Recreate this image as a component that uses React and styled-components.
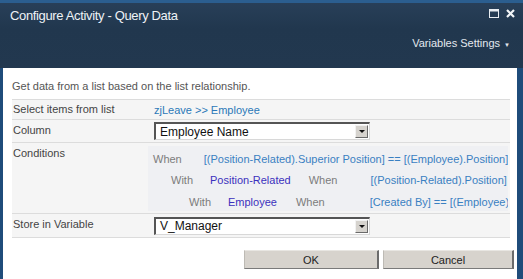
import React from 'react';
import styled, { createGlobalStyle } from 'styled-components';

const GlobalStyle = createGlobalStyle`
  html, body {
    margin: 0;
    padding: 0;
    overflow: hidden;
    background: #fff;
  }
`;

const Frame = styled.div`
  width: 523px;
  height: 279px;
  box-sizing: border-box;
  display: flex;
  flex-direction: column;
  background: #1f4c7a;
  font-family: "Liberation Sans", Arial, sans-serif;
`;

const TitleBar = styled.div`
  height: 68px;
  flex: none;
  box-sizing: border-box;
  border-top: 3px solid #2b5e8f;
  background: linear-gradient(#283f58, #21374e 40%, #22384f);
  color: #eef2f6;
  display: flex;
  flex-direction: column;
  padding: 0 8px 0 10px;
`;

const TitleRow = styled.div`
  display: flex;
  align-items: center;
  justify-content: space-between;
  height: 22px;
  margin-top: 1px;
`;

const Title = styled.div`
  font-size: 13px;
  letter-spacing: -0.35px;
`;

const WindowIcons = styled.div`
  display: flex;
  align-items: center;
  gap: 7px;
  margin-top: -3px;
`;

const MenuRow = styled.div`
  display: flex;
  justify-content: flex-end;
  align-items: center;
  margin-top: 11px;
  padding-right: 5px;
  font-size: 11px;
  color: #e3e8ee;
`;

const Caret = styled.span`
  font-size: 6px;
  margin-left: 4px;
  margin-top: 3px;
`;

const Body = styled.div`
  flex: 1;
  background: #fff;
  margin: 0 6px 0 3px;
  padding: 11px 7px 0 9px;
  display: flex;
  flex-direction: column;
`;

const Intro = styled.div`
  font-size: 11px;
  color: #555;
  height: 20px;
  line-height: 14px;
`;

const Table = styled.div`
  display: grid;
  grid-template-columns: 136px 1fr;
  border-top: 1px solid #dcdcdc;
  background: #f5f5f5;
`;

const Label = styled.div`
  font-size: 11px;
  color: #444;
  padding: ${({ $top }) => $top || '4px'} 0 0 1px;
  border-bottom: 1px solid #dcdcdc;
  height: ${({ $h }) => $h}px;
  box-sizing: border-box;
`;

const Value = styled.div`
  border-bottom: 1px solid #dcdcdc;
  height: ${({ $h }) => $h}px;
  box-sizing: border-box;
  padding-left: 6px;
  display: flex;
  align-items: center;
  min-width: 0;
  overflow: hidden;
`;

const Link = styled.span`
  font-size: 11px;
  color: #2a78b8;
`;

const SelectBox = styled.div`
  width: 216px;
  height: 18px;
  box-sizing: border-box;
  background: #fff;
  border-top: 2px solid #555;
  border-left: 2px solid #555;
  border-bottom: 1px solid #d8d8d8;
  border-right: 1px solid #d8d8d8;
  display: flex;
  align-items: center;
  justify-content: space-between;
  font-size: 12px;
  color: #111;
  padding-left: 4px;
`;

const DropButton = styled.div`
  width: 13px;
  height: 13px;
  box-sizing: border-box;
  margin-right: 1px;
  background: #d6d3ce;
  border: 1px solid;
  border-color: #f2f2f2 #6a6a6a #6a6a6a #f2f2f2;
  display: flex;
  align-items: center;
  justify-content: center;
`;

const Arrow = styled.span`
  width: 0;
  height: 0;
  border-left: 3px solid transparent;
  border-right: 3px solid transparent;
  border-top: 3px solid #111;
`;

const CondCell = styled.div`
  border-bottom: 1px solid #dcdcdc;
  height: 71px;
  box-sizing: border-box;
  padding: 3px 2px 2px 0;
  overflow: hidden;
`;

const CondBox = styled.div`
  background: #eff0f3;
  height: 100%;
  padding: 2px 0 0 5px;
  box-sizing: border-box;
  overflow: hidden;
`;

const CondLine = styled.div`
  display: flex;
  align-items: center;
  height: 21.5px;
  padding-left: ${({ $indent }) => $indent}px;
  white-space: nowrap;
  font-size: 11px;
`;

const Keyword = styled.span`
  color: #7c7c7c;
  margin-right: ${({ $after }) => $after}px;
`;

const ListName = styled.span`
  color: #3b30bd;
  margin-right: ${({ $after }) => $after}px;
`;

const Expr = styled.span`
  color: #3a80c2;
`;

const Footer = styled.div`
  display: flex;
  justify-content: flex-end;
  gap: 4px;
  margin-top: 12px;
  margin-right: -4px;
`;

const Button = styled.button`
  width: ${({ $w }) => $w}px;
  height: 19px;
  padding: 0;
  background: #d7d3cd;
  border: 1px solid;
  border-color: #e8e6e2 #6b6b6b #7a7a7a #bdbab4;
  border-right-width: 2px;
  font-family: "Liberation Sans", Arial, sans-serif;
  font-size: 11px;
  color: #222;
`;

const MaxIcon = () => (
  <svg width="10" height="9" viewBox="0 0 10 9">
    <rect x="0.5" y="0.5" width="9" height="8" fill="none" stroke="#e8edf2" />
    <rect x="0.5" y="0.5" width="9" height="2" fill="#e8edf2" />
  </svg>
);

const CloseIcon = () => (
  <svg width="9" height="9" viewBox="0 0 9 9">
    <path d="M1 1 L8 8 M8 1 L1 8" stroke="#f2f5f8" strokeWidth="2.2" />
  </svg>
);

export default function App() {
  return (
    <Frame>
      <GlobalStyle />
      <TitleBar>
        <TitleRow>
          <Title>Configure Activity - Query Data</Title>
          <WindowIcons>
            <MaxIcon />
            <CloseIcon />
          </WindowIcons>
        </TitleRow>
        <MenuRow>
          Variables Settings<Caret>▼</Caret>
        </MenuRow>
      </TitleBar>
      <Body>
        <Intro>Get data from a list based on the list relationship.</Intro>
        <Table>
          <Label $h={20} $top="3px">Select items from list</Label>
          <Value $h={20}>
            <Link>zjLeave &gt;&gt; Employee</Link>
          </Value>

          <Label $h={23}>Column</Label>
          <Value $h={23}>
            <SelectBox>
              Employee Name
              <DropButton><Arrow /></DropButton>
            </SelectBox>
          </Value>

          <Label $h={71}>Conditions</Label>
          <CondCell>
            <CondBox>
              <CondLine $indent={0}>
                <Keyword $after={22}>When</Keyword>
                <Expr>[(Position-Related).Superior Position] == [(Employee).Position]</Expr>
              </CondLine>
              <CondLine $indent={18}>
                <Keyword $after={17}>With</Keyword>
                <ListName $after={18}>Position-Related</ListName>
                <Keyword $after={33}>When</Keyword>
                <Expr>[(Position-Related).Position] == [(Employee).Position]</Expr>
              </CondLine>
              <CondLine $indent={36}>
                <Keyword $after={17}>With</Keyword>
                <ListName $after={19}>Employee</ListName>
                <Keyword $after={45}>When</Keyword>
                <Expr>[Created By] == [(Employee).Account]</Expr>
              </CondLine>
            </CondBox>
          </CondCell>

          <Label $h={24}>Store in Variable</Label>
          <Value $h={24}>
            <SelectBox>
              V_Manager
              <DropButton><Arrow /></DropButton>
            </SelectBox>
          </Value>
        </Table>
        <Footer>
          <Button $w={135}>OK</Button>
          <Button $w={131}>Cancel</Button>
        </Footer>
      </Body>
    </Frame>
  );
}
